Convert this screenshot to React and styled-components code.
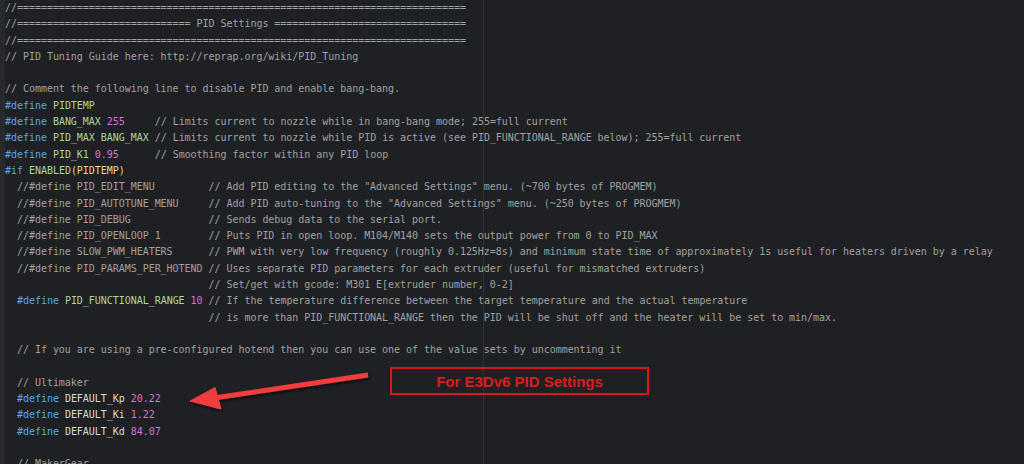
import React from "react";
import styled, { createGlobalStyle } from "styled-components";

const Global = createGlobalStyle`
  html, body { margin: 0; padding: 0; background: #1f2023; }
  body { overflow: hidden; }
`;

const Editor = styled.div`
  position: relative;
  width: 1024px;
  height: 464px;
  overflow: hidden;
  box-sizing: border-box;
  padding-left: 5px;
  background-color: #1f2023;
  background-image:
    linear-gradient(to right, #28292c 0, #28292c 5px, transparent 5px),
    linear-gradient(to right, transparent 483px, #303136 483px, #303136 484px, transparent 484px);
  font-family: "DejaVu Sans Mono", "Liberation Mono", monospace;
  font-size: 10px;
  letter-spacing: -0.035px;
  color: #d4d4d4;
`;

const Code = styled.div`
  display: flex;
  flex-direction: column;
`;

const Line = styled.div`
  height: 16.3px;
  line-height: 16.3px;
  white-space: pre;
`;

const Cmt = styled.span`color: #a0a0a0;`;
const Kw = styled.span`color: #5ea5e0;`;
const Macro = styled.span`color: #a8d69e;`;
const Num = styled.span`color: #d472d8;`;
const Paren = styled.span`color: #e6d88e;`;
const Plain = styled.span`color: #dadada;`;

const Callout = styled.div`
  position: absolute;
  left: 390px;
  top: 367px;
  width: 259px;
  height: 28px;
  box-sizing: border-box;
  border: 2px solid #d41a1a;
  display: flex;
  align-items: center;
  justify-content: center;
  font-family: "Liberation Sans", Arial, sans-serif;
  font-weight: bold;
  font-size: 15px;
  color: #dc1c1c;
  letter-spacing: 0;
`;

const ArrowSvg = styled.svg`
  position: absolute;
  left: 180px;
  top: 360px;
  overflow: visible;
`;

const EQ = "=".repeat(75);

const lines = [
  [<Cmt>{"//" + EQ}</Cmt>],
  [<Cmt>{"//" + "=".repeat(29) + " PID Settings " + "=".repeat(32)}</Cmt>],
  [<Cmt>{"//" + EQ}</Cmt>],
  [<Cmt>{"// PID Tuning Guide here: http://reprap.org/wiki/PID_Tuning"}</Cmt>],
  [],
  [<Cmt>{"// Comment the following line to disable PID and enable bang-bang."}</Cmt>],
  [<Kw>#define</Kw>, " ", <Macro>PIDTEMP</Macro>],
  [<Kw>#define</Kw>, " ", <Macro>BANG_MAX</Macro>, " ", <Num>255</Num>, "     ", <Cmt>{"// Limits current to nozzle while in bang-bang mode; 255=full current"}</Cmt>],
  [<Kw>#define</Kw>, " ", <Macro>PID_MAX BANG_MAX</Macro>, " ", <Cmt>{"// Limits current to nozzle while PID is active (see PID_FUNCTIONAL_RANGE below); 255=full current"}</Cmt>],
  [<Kw>#define</Kw>, " ", <Macro>PID_K1</Macro>, " ", <Num>0.95</Num>, "      ", <Cmt>{"// Smoothing factor within any PID loop"}</Cmt>],
  [<Kw>#if</Kw>, " ", <Macro>ENABLED</Macro>, <Paren>(PIDTEMP)</Paren>],
  [<Cmt>{'  //#define PID_EDIT_MENU         // Add PID editing to the "Advanced Settings" menu. (~700 bytes of PROGMEM)'}</Cmt>],
  [<Cmt>{'  //#define PID_AUTOTUNE_MENU     // Add PID auto-tuning to the "Advanced Settings" menu. (~250 bytes of PROGMEM)'}</Cmt>],
  [<Cmt>{"  //#define PID_DEBUG             // Sends debug data to the serial port."}</Cmt>],
  [<Cmt>{"  //#define PID_OPENLOOP 1        // Puts PID in open loop. M104/M140 sets the output power from 0 to PID_MAX"}</Cmt>],
  [<Cmt>{"  //#define SLOW_PWM_HEATERS      // PWM with very low frequency (roughly 0.125Hz=8s) and minimum state time of approximately 1s useful for heaters driven by a relay"}</Cmt>],
  [<Cmt>{"  //#define PID_PARAMS_PER_HOTEND // Uses separate PID parameters for each extruder (useful for mismatched extruders)"}</Cmt>],
  [<Cmt>{"                                  // Set/get with gcode: M301 E[extruder number, 0-2]"}</Cmt>],
  ["  ", <Kw>#define</Kw>, " ", <Macro>PID_FUNCTIONAL_RANGE</Macro>, " ", <Num>10</Num>, " ", <Cmt>{"// If the temperature difference between the target temperature and the actual temperature"}</Cmt>],
  [<Cmt>{"                                  // is more than PID_FUNCTIONAL_RANGE then the PID will be shut off and the heater will be set to min/max."}</Cmt>],
  [],
  [<Cmt>{"  // If you are using a pre-configured hotend then you can use one of the value sets by uncommenting it"}</Cmt>],
  [],
  [<Cmt>{"  // Ultimaker"}</Cmt>],
  ["  ", <Kw>#define</Kw>, " ", <Plain>DEFAULT_Kp</Plain>, " ", <Num>20.22</Num>],
  ["  ", <Kw>#define</Kw>, " ", <Plain>DEFAULT_Ki</Plain>, " ", <Num>1.22</Num>],
  ["  ", <Kw>#define</Kw>, " ", <Plain>DEFAULT_Kd</Plain>, " ", <Num>84.07</Num>],
  [],
  [<Cmt>{"  // MakerGear"}</Cmt>],
];

function Arrow() {
  return (
    <ArrowSvg width="200" height="60" viewBox="0 0 200 60">
      <defs>
        <filter id="sh" x="-20%" y="-50%" width="140%" height="200%">
          <feDropShadow dx="1.5" dy="2" stdDeviation="1.5" floodColor="#000" floodOpacity="0.6" />
        </filter>
      </defs>
      <g filter="url(#sh)" fill="#f03c3e" stroke="#f03c3e">
        <line x1="188" y1="15" x2="34" y2="38" strokeWidth="5" strokeLinecap="butt" />
        <polygon points="10,41 35,27.5 41,49" strokeWidth="1" strokeLinejoin="round" />
      </g>
    </ArrowSvg>
  );
}

export default function App() {
  return (
    <>
      <Global />
      <Editor>
        <Code>
          {lines.map((parts, i) => (
            <Line key={i}>
              {parts.length === 0 ? " " : parts.map((p, j) => <React.Fragment key={j}>{p}</React.Fragment>)}
            </Line>
          ))}
        </Code>
        <Callout>For E3Dv6 PID Settings</Callout>
        <Arrow />
      </Editor>
    </>
  );
}
